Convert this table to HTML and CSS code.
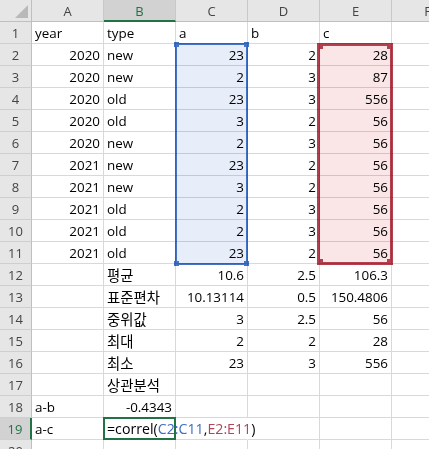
FILE: index.html
```html
<!DOCTYPE html>
<html>
<head>
<meta charset="utf-8">
<link rel="stylesheet" href="styles.css">
</head>
<body>
<div class="wrap">
  <div class="sheet">
    <div class="corner"><svg width="32" height="22" viewBox="0 0 32 22"><polygon points="15,18 28,18 28,5" fill="#b9b9b9"/></svg></div>
    <div class="ch">A</div><div class="ch sel">B</div><div class="ch">C</div><div class="ch">D</div><div class="ch">E</div><div class="ch">F</div>

    <div class="rh">1</div><div class="c">year</div><div class="c">type</div><div class="c">a</div><div class="c">b</div><div class="c">c</div><div class="c"></div>
    <div class="rh">2</div><div class="c n">2020</div><div class="c">new</div><div class="c n">23</div><div class="c n">2</div><div class="c n">28</div><div class="c"></div>
    <div class="rh">3</div><div class="c n">2020</div><div class="c">new</div><div class="c n">2</div><div class="c n">3</div><div class="c n">87</div><div class="c"></div>
    <div class="rh">4</div><div class="c n">2020</div><div class="c">old</div><div class="c n">23</div><div class="c n">3</div><div class="c n">556</div><div class="c"></div>
    <div class="rh">5</div><div class="c n">2020</div><div class="c">old</div><div class="c n">3</div><div class="c n">2</div><div class="c n">56</div><div class="c"></div>
    <div class="rh">6</div><div class="c n">2020</div><div class="c">new</div><div class="c n">2</div><div class="c n">3</div><div class="c n">56</div><div class="c"></div>
    <div class="rh">7</div><div class="c n">2021</div><div class="c">new</div><div class="c n">23</div><div class="c n">2</div><div class="c n">56</div><div class="c"></div>
    <div class="rh">8</div><div class="c n">2021</div><div class="c">new</div><div class="c n">3</div><div class="c n">2</div><div class="c n">56</div><div class="c"></div>
    <div class="rh">9</div><div class="c n">2021</div><div class="c">old</div><div class="c n">2</div><div class="c n">3</div><div class="c n">56</div><div class="c"></div>
    <div class="rh">10</div><div class="c n">2021</div><div class="c">old</div><div class="c n">2</div><div class="c n">3</div><div class="c n">56</div><div class="c"></div>
    <div class="rh">11</div><div class="c n">2021</div><div class="c">old</div><div class="c n">23</div><div class="c n">2</div><div class="c n">56</div><div class="c"></div>
    <div class="rh">12</div><div class="c"></div><div class="c ko">평균</div><div class="c n">10.6</div><div class="c n">2.5</div><div class="c n">106.3</div><div class="c"></div>
    <div class="rh">13</div><div class="c"></div><div class="c ko">표준편차</div><div class="c n">10.13114</div><div class="c n">0.5</div><div class="c n">150.4806</div><div class="c"></div>
    <div class="rh">14</div><div class="c"></div><div class="c ko">중위값</div><div class="c n">3</div><div class="c n">2.5</div><div class="c n">56</div><div class="c"></div>
    <div class="rh">15</div><div class="c"></div><div class="c ko">최대</div><div class="c n">2</div><div class="c n">2</div><div class="c n">28</div><div class="c"></div>
    <div class="rh">16</div><div class="c"></div><div class="c ko">최소</div><div class="c n">23</div><div class="c n">3</div><div class="c n">556</div><div class="c"></div>
    <div class="rh">17</div><div class="c"></div><div class="c ko">상관분석</div><div class="c"></div><div class="c"></div><div class="c"></div><div class="c"></div>
    <div class="rh">18</div><div class="c">a-b</div><div class="c n">-0.4343</div><div class="c"></div><div class="c"></div><div class="c"></div><div class="c"></div>
    <div class="rh sel">19</div><div class="c">a-c</div><div class="c edit">=correl(<span class="ref-b">C2:C11</span>,<span class="ref-r">E2:E11</span>)<span class="caret"></span></div><div class="c spill"></div><div class="c"></div><div class="c"></div><div class="c"></div>
    <div class="rh">20</div><div class="c"></div><div class="c"></div><div class="c"></div><div class="c"></div><div class="c"></div><div class="c"></div>
  </div>
  <div class="layer">
    <div class="range blue"><i class="h tl"></i><i class="h tr"></i><i class="h bl"></i><i class="h br"></i></div>
    <div class="range red"><i class="h tl"></i><i class="h tr"></i><i class="h bl"></i><i class="h br"></i></div>
    <div class="active"></div>
  </div>
</div>
</body>
</html>
```

FILE: styles.css
```css
html, body {
  margin: 0;
  padding: 0;
  background: #ffffff;
  overflow: hidden;
}

.wrap {
  position: relative;
  width: 464px;
}

.sheet,
.layer {
  display: grid;
  grid-template-columns: 32px repeat(6, 72px);
  grid-template-rows: 22px repeat(20, 22px);
}

.layer {
  position: absolute;
  left: 0;
  top: 0;
  right: 0;
  bottom: 0;
  pointer-events: none;
}

.corner {
  background: #e6e6e6;
  border-right: 1px solid #bfbfbf;
  border-bottom: 1px solid #bfbfbf;
  box-sizing: border-box;
  overflow: hidden;
}

.corner svg {
  display: block;
}

.ch,
.rh {
  box-sizing: border-box;
  background: #e6e6e6;
  color: #444444;
  font-family: "Open Sans", "Noto Sans", sans-serif;
  font-size: 13px;
  display: flex;
  align-items: center;
  justify-content: center;
}

.ch {
  border-right: 1px solid #c8c8c8;
  border-bottom: 1px solid #bfbfbf;
  padding-top: 1px;
}

.rh {
  border-right: 1px solid #bfbfbf;
  border-bottom: 1px solid #cfcfcf;
  padding-top: 1px;
}

.ch.sel {
  background: #d2d2d2;
  color: #217346;
  border-bottom: 2px solid #217346;
}

.rh.sel {
  background: #d2d2d2;
  color: #217346;
  border-right: 2px solid #217346;
}

.c {
  box-sizing: border-box;
  border-right: 1px solid #d9d9d9;
  border-bottom: 1px solid #d9d9d9;
  padding: 0 3px;
  font-family: "Open Sans", "Noto Sans", "Noto Sans CJK KR", sans-serif;
  font-size: 13.4px;
  color: #000000;
  display: flex;
  align-items: flex-end;
  white-space: nowrap;
  overflow: hidden;
  line-height: 18px;
  padding-bottom: 1px;
}

.c.n {
  justify-content: flex-end;
}

.c.ko {
  font-family: "Noto Sans CJK KR", sans-serif;
  font-size: 14.4px;
  line-height: 20px;
  padding-bottom: 0;
}

.c.edit {
  overflow: visible;
  position: relative;
  font-size: 14.2px;
}

.c.spill {
  border-right-color: transparent;
}

.ref-b {
  color: #3f6cc0;
}

.ref-r {
  color: #b0465a;
}

.caret {
  display: inline-block;
  width: 1px;
  height: 17px;
  background: #000000;
  margin-left: 1px;
  margin-bottom: 0;
}

.range {
  position: relative;
  box-sizing: border-box;
  mix-blend-mode: multiply;
}

.range.blue {
  grid-column: 4;
  grid-row: 3 / 13;
  margin: -1px 0 -1px -1px;
  background: #e7edf9;
  border: 2px solid #4472c4;
}

.range.red {
  grid-column: 6;
  grid-row: 3 / 13;
  margin: -1px -1px -1px -3px;
  background: #fae5e7;
  border: 3px solid #b3404f;
}

.h {
  position: absolute;
  width: 5px;
  height: 5px;
}

.blue .h {
  background: #4472c4;
}

.red .h {
  background: #b3404f;
  width: 6px;
  height: 6px;
}

.blue .tl { left: -3px; top: -3px; }
.blue .tr { right: -3px; top: -3px; }
.blue .bl { left: -3px; bottom: -3px; }
.blue .br { right: -3px; bottom: -3px; }

.red .tl { left: -3px; top: -3px; }
.red .tr { right: -3px; top: -3px; }
.red .bl { left: -3px; bottom: -3px; }
.red .br { right: -3px; bottom: -3px; }

.active {
  grid-column: 3;
  grid-row: 20;
  margin: -1px 0 0 -1px;
  box-sizing: border-box;
  border: 2px solid #217346;
}
```
